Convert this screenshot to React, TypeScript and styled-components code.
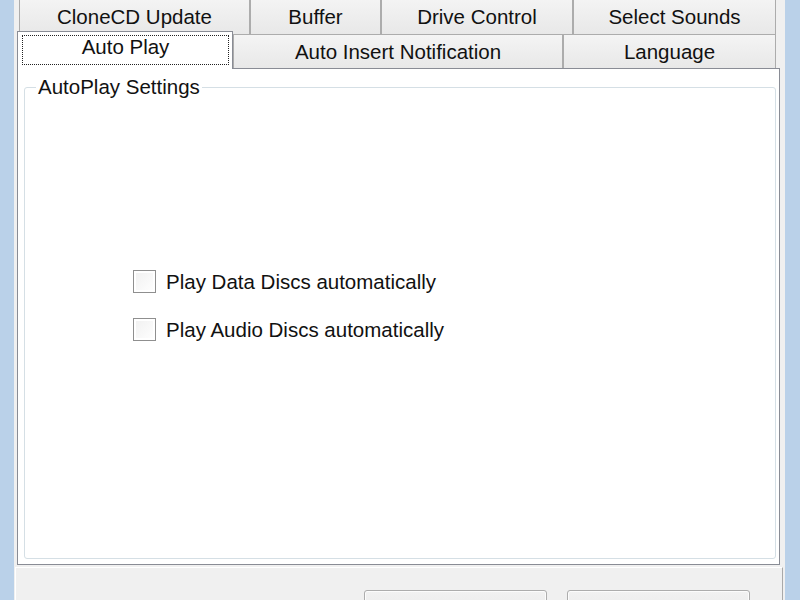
import React from 'react';
import styled, { createGlobalStyle } from 'styled-components';

const GlobalStyle = createGlobalStyle`
  html, body {
    margin: 0;
    padding: 0;
    background: #f0f0f0;
  }
  body {
    font-family: "Liberation Sans", Arial, sans-serif;
    color: #111;
  }
`;

const Window = styled.div`
  height: 600px;
  box-sizing: border-box;
  border-left: 14px solid #bad1e9;
  border-right: 15px solid #bad1e9;
  background: #f0f0f0;
  display: flex;
  flex-direction: column;
  overflow: hidden;
`;

const TabControl = styled.div`
  margin-left: 3px;
  width: 763px;
  display: flex;
  flex-direction: column;
`;

// back row is pushed up so its top edge is cut off, like the screenshot
const TabRow = styled.div<{ $back?: boolean; $indent: number }>`
  display: flex;
  align-items: flex-end;
  height: ${p => (p.$back ? 37 : 34)}px;
  padding-left: ${p => p.$indent}px;
  margin-top: ${p => (p.$back ? -3 : 0)}px;
`;

const Tab = styled.div<{ $width: number; $back?: boolean }>`
  box-sizing: border-box;
  width: ${p => p.$width}px;
  height: ${p => (p.$back ? 37 : 34)}px;
  padding-top: ${p => (p.$back ? 2 : 0)}px;
  border: 1px solid #acacac;
  border-bottom: none;
  background: linear-gradient(#f4f4f4, #e8e8e8);
  display: flex;
  align-items: center;
  justify-content: center;
  font-size: 20.5px;
  white-space: nowrap;
`;

const ActiveTab = styled.div<{ $width: number }>`
  position: relative;
  z-index: 2;
  box-sizing: border-box;
  width: ${p => p.$width}px;
  height: 38px;
  margin-bottom: -1px;
  padding: 3px 3px 4px 4px;
  border: 1px solid #898c95;
  border-bottom: none;
  background: #fff;
  display: flex;
  font-size: 20.5px;
`;

const FocusLabel = styled.span`
  flex: 1;
  border: 1px dotted #222;
  display: flex;
  justify-content: center;
  align-items: center;
  padding-bottom: 6px;
  white-space: nowrap;
`;

const Panel = styled.div`
  position: relative;
  z-index: 1;
  box-sizing: border-box;
  height: 497px;
  border: 1px solid #898c95;
  background: #fff;
  padding: 6px 3px 5px 6px;
  display: flex;
`;

const GroupBox = styled.fieldset`
  flex: 1;
  margin: 0;
  padding: 0;
  border: 1px solid #d5dfe5;
  border-radius: 3px;
  min-width: 0;
`;

const Legend = styled.legend`
  margin-left: 11px;
  padding: 0 2px;
  font-size: 20.5px;
  line-height: 24px;
`;

const CheckList = styled.div`
  display: flex;
  flex-direction: column;
  gap: 25px;
  padding: 171px 0 0 108px;
`;

const CheckRow = styled.label`
  display: flex;
  align-items: center;
  gap: 10px;
  font-size: 20.5px;
  line-height: 23px;
`;

const Box = styled.span`
  box-sizing: border-box;
  width: 23px;
  height: 23px;
  border: 1px solid #8f8f8f;
  background: linear-gradient(135deg, #f0f0f0, #ffffff);
  box-shadow: inset 0 0 0 2px #fff;
`;

const Footer = styled.div`
  flex: 1;
  margin: 2px 2px 0 1px;
  border-top: 1px solid #fff;
  border-left: 1px solid #fff;
  border-right: 1px solid #a9a9a9;
  display: flex;
  justify-content: flex-end;
  gap: 20px;
  padding: 22px 32px 0 0;
`;

// labels sit below the visible area, so only the frames show
const Button = styled.button`
  box-sizing: border-box;
  width: 183px;
  height: 44px;
  border: 1px solid #adadad;
  border-radius: 3px;
  background: linear-gradient(#f2f2f2, #e2e2e2);
  box-shadow: inset 0 0 0 1px #fcfcfc;
`;

const backTabs = [
  { label: 'CloneCD Update', width: 231 },
  { label: 'Buffer', width: 131 },
  { label: 'Drive Control', width: 192 },
  { label: 'Select Sounds', width: 203 },
];

const frontTabs = [
  { label: 'Auto Insert Notification', width: 330 },
  { label: 'Language', width: 213 },
];

export default function App() {
  return (
    <>
      <GlobalStyle />
      <Window>
        <TabControl>
          <TabRow $back $indent={2}>
            {backTabs.map(t => (
              <Tab key={t.label} $width={t.width} $back>
                {t.label}
              </Tab>
            ))}
          </TabRow>
          <TabRow $indent={0}>
            <ActiveTab $width={216}>
              <FocusLabel>Auto Play</FocusLabel>
            </ActiveTab>
            {frontTabs.map(t => (
              <Tab key={t.label} $width={t.width}>
                {t.label}
              </Tab>
            ))}
          </TabRow>
          <Panel>
            <GroupBox>
              <Legend>AutoPlay Settings</Legend>
              <CheckList>
                <CheckRow>
                  <Box />
                  Play Data Discs automatically
                </CheckRow>
                <CheckRow>
                  <Box />
                  Play Audio Discs automatically
                </CheckRow>
              </CheckList>
            </GroupBox>
          </Panel>
        </TabControl>
        <Footer>
          <Button aria-label="OK" />
          <Button aria-label="Cancel" />
        </Footer>
      </Window>
    </>
  );
}
